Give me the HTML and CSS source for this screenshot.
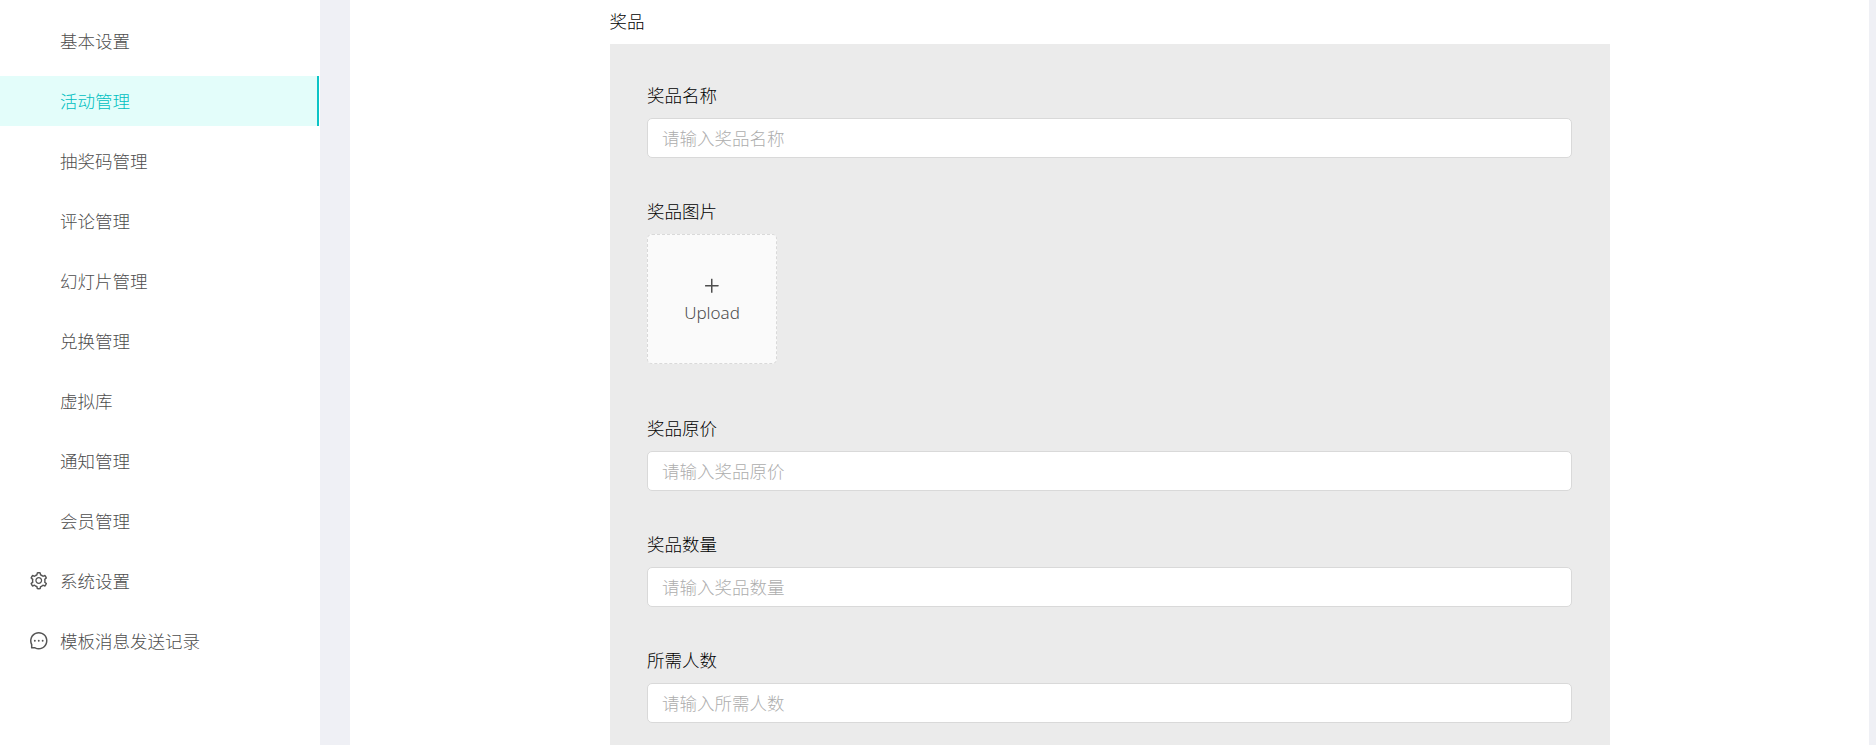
FILE: index.html
```html
<!DOCTYPE html>
<html lang="zh-CN">
<head>
    <meta charset="UTF-8">
    <meta name="viewport" content="width=device-width, initial-scale=1.0">
    <title>活动管理</title>
    <link rel="stylesheet" href="styles.css">
</head>
<body>

    <div class="layout">
        <!-- 侧边栏 -->
        <aside class="sider">
            <ul class="menu">
                <li class="menu-item">基本设置</li>
                <li class="menu-item active">活动管理</li>
                <li class="menu-item">抽奖码管理</li>
                <li class="menu-item">评论管理</li>
                <li class="menu-item">幻灯片管理</li>
                <li class="menu-item">兑换管理</li>
                <li class="menu-item">虚拟库</li>
                <li class="menu-item">通知管理</li>
                <li class="menu-item">会员管理</li>
                <li class="menu-item has-icon">
                    <svg class="menu-icon" viewBox="64 64 896 896" fill="currentColor"><path d="M924.8 625.7l-65.5-56c3.1-19 4.7-38.4 4.7-57.8s-1.6-38.8-4.7-57.8l65.5-56a32.03 32.03 0 0 0 9.3-35.2l-.9-2.6a443.74 443.74 0 0 0-79.7-137.9l-1.8-2.1a32.12 32.12 0 0 0-35.1-9.5l-81.3 28.9c-30-24.6-63.5-44-99.7-57.6l-15.7-85a32.05 32.05 0 0 0-25.8-25.7l-2.7-.5c-52.1-9.4-106.9-9.4-159 0l-2.7.5a32.05 32.05 0 0 0-25.8 25.7l-15.8 85.4a351.86 351.86 0 0 0-99 57.4l-81.9-29.1a32 32 0 0 0-35.1 9.5l-1.8 2.1a446.02 446.02 0 0 0-79.7 137.9l-.9 2.6c-4.5 12.5-.8 26.5 9.3 35.2l66.3 56.6c-3.1 18.8-4.6 38-4.6 57.1 0 19.2 1.5 38.4 4.6 57.1L99 625.5a32.03 32.03 0 0 0-9.3 35.2l.9 2.6c18.1 50.4 44.9 96.9 79.7 137.9l1.8 2.1a32.12 32.12 0 0 0 35.1 9.5l81.9-29.1c29.8 24.5 63.1 43.9 99 57.4l15.8 85.4a32.05 32.05 0 0 0 25.8 25.7l2.7.5a449.4 449.4 0 0 0 159 0l2.7-.5a32.05 32.05 0 0 0 25.8-25.7l15.7-85a350 350 0 0 0 99.7-57.6l81.3 28.9a32 32 0 0 0 35.1-9.5l1.8-2.1c34.8-41.1 61.6-87.5 79.7-137.9l.9-2.6c4.5-12.3.8-26.3-9.3-35zM788.3 465.9c2.5 15.1 3.8 30.6 3.8 46.1s-1.3 31-3.8 46.1l-6.6 40.1 74.7 63.9a370.03 370.03 0 0 1-42.6 73.6L721 702.8l-31.4 25.8c-23.9 19.6-50.5 35-79.3 45.8l-38.1 14.3-17.9 97a377.5 377.5 0 0 1-85 0l-17.9-97.2-37.8-14.5c-28.5-10.8-55-26.2-78.7-45.7l-31.4-25.9-93.4 33.2c-17-22.9-31.2-47.6-42.6-73.6l75.5-64.5-6.5-40c-2.4-14.9-3.7-30.3-3.7-45.5 0-15.3 1.2-30.6 3.7-45.5l6.5-40-75.5-64.5c11.3-26.1 25.6-50.7 42.6-73.6l93.4 33.2 31.4-25.9c23.7-19.5 50.2-34.9 78.7-45.7l37.9-14.3 17.9-97.2c28.1-3.2 56.8-3.2 85 0l17.9 97 38.1 14.3c28.7 10.8 55.4 26.2 79.3 45.8l31.4 25.8 92.8-32.9c17 22.9 31.2 47.6 42.6 73.6L781.8 426l6.5 39.9zM512 326c-97.2 0-176 78.8-176 176s78.8 176 176 176 176-78.8 176-176-78.8-176-176-176zm79.2 255.2A111.6 111.6 0 0 1 512 614c-29.9 0-58-11.7-79.2-32.8A111.6 111.6 0 0 1 400 502c0-29.9 11.7-58 32.8-79.2C454 401.6 482.1 390 512 390c29.9 0 58 11.6 79.2 32.8A111.6 111.6 0 0 1 624 502c0 29.9-11.7 58-32.8 79.2z"/></svg>
                    系统设置
                </li>
                <li class="menu-item has-icon">
                    <svg class="menu-icon" viewBox="64 64 896 896" fill="currentColor"><path d="M464 512a48 48 0 1 0 96 0 48 48 0 1 0-96 0zm200 0a48 48 0 1 0 96 0 48 48 0 1 0-96 0zm-400 0a48 48 0 1 0 96 0 48 48 0 1 0-96 0zm661.2-173.6c-22.6-53.7-55-101.9-96.3-143.3a444.35 444.35 0 0 0-143.3-96.3C630.6 75.7 572.2 64 512 64h-2c-60.6.3-119.3 12.3-174.5 35.9a445.35 445.35 0 0 0-142 96.5c-40.9 41.3-73 89.3-95.2 142.8-23 55.4-34.6 114.3-34.3 174.9A449.4 449.4 0 0 0 112 714v152a46 46 0 0 0 46 46h152.1A449.4 449.4 0 0 0 510 960h2.1c59.9 0 118-11.6 172.7-34.3a444.48 444.48 0 0 0 142.8-95.2c41.3-40.9 73.8-88.7 96.5-142 23.6-55.2 35.6-113.9 35.9-174.5.3-60.9-11.5-120-34.8-175.6zm-151.1 438C704 845.8 611 884 512 884h-1.7c-60.3-.3-120.2-15.3-173.1-43.5l-8.4-4.5H188V695.2l-4.5-8.4C155.3 633.9 140.3 574 140 513.7c-.4-99.7 37.7-193.3 107.6-263.8 69.8-70.5 163.1-109.5 262.8-109.9h1.7c50 0 98.5 9.7 144.2 28.9 44.6 18.7 84.6 45.6 119 80 34.3 34.3 61.3 74.4 80 119 19.4 46.2 29.1 95.2 28.9 145.8-.6 99.6-39.7 192.9-110.1 262.7z"/></svg>
                    模板消息发送记录
                </li>
            </ul>
        </aside>

        <!-- 内容区 -->
        <main class="content">
            <form class="prize-form">
                <div class="prize-title">奖品</div>
                <div class="prize-panel">
                    <div class="form-item">
                        <label class="form-label" for="prizeName">奖品名称</label>
                        <input class="form-input" type="text" id="prizeName" placeholder="请输入奖品名称">
                    </div>

                    <div class="form-item form-item-upload">
                        <label class="form-label">奖品图片</label>
                        <div class="upload-box">
                            <svg class="upload-plus" viewBox="64 64 896 896" fill="currentColor"><path d="M482 152h60q8 0 8 8v704q0 8-8 8h-60q-8 0-8-8V160q0-8 8-8z"/><path d="M176 474h672q8 0 8 8v60q0 8-8 8H176q-8 0-8-8v-60q0-8 8-8z"/></svg>
                            <div class="upload-text">Upload</div>
                        </div>
                    </div>

                    <div class="form-item">
                        <label class="form-label" for="prizePrice">奖品原价</label>
                        <input class="form-input" type="text" id="prizePrice" placeholder="请输入奖品原价">
                    </div>

                    <div class="form-item">
                        <label class="form-label" for="prizeCount">奖品数量</label>
                        <input class="form-input" type="text" id="prizeCount" placeholder="请输入奖品数量">
                    </div>

                    <div class="form-item">
                        <label class="form-label" for="needCount">所需人数</label>
                        <input class="form-input" type="text" id="needCount" placeholder="请输入所需人数">
                    </div>
                </div>
            </form>
        </main>
    </div>

</body>
</html>
```

FILE: styles.css
```css
html, body {
    height: 745px;
    margin: 0;
    overflow: hidden;
}
body {
    font-family: 'Liberation Sans', 'Noto Sans CJK SC', sans-serif;
    font-size: 17.5px;
    font-weight: 300;
    background-color: #eff0f5;
}
.layout {
    display: flex;
    height: 745px;
    overflow: hidden;
}

/* 侧边栏 */
.sider {
    width: 320px;
    flex-shrink: 0;
    background-color: #fff;
}
.menu {
    list-style: none;
    margin: 0;
    padding: 16px 1px 0 0;
    display: flex;
    flex-direction: column;
    gap: 10px;
}
.menu-item {
    display: flex;
    align-items: center;
    height: 50px;
    padding: 0 0 1px 60px;
    color: #4d4d4d;
    box-sizing: border-box;
}
.menu-item.active {
    background-color: #e3fdfa;
    border-right: 2px solid #0cc4c6;
    color: #00bfc1;
}
.menu-item.has-icon {
    padding-left: 30px;
}
.menu-icon {
    width: 17.5px;
    height: 17.5px;
    margin: 1px 12.5px 0 0;
    color: #555;
}

/* 内容区 */
.content {
    flex: 1;
    margin: 0 7px 0 30px;
    background-color: #fff;
}
.prize-form {
    width: 1000px;
    margin: 0 auto;
    padding-top: 8px;
}
.prize-title {
    height: 28px;
    margin-bottom: 8px;
    line-height: 28px;
    color: #000;
}
.prize-panel {
    padding: 38px 37.5px 40px;
    background-color: #ebebeb;
}
.form-item {
    margin-bottom: 40px;
}
.form-item-upload {
    margin-bottom: 51px;
}
.form-label {
    display: block;
    height: 28px;
    margin-bottom: 8px;
    line-height: 28px;
    color: #000;
}
.form-input {
    display: block;
    width: 100%;
    height: 40px;
    padding: 2px 14px 0;
    box-sizing: border-box;
    border: 1px solid #d9d9d9;
    border-radius: 5px;
    background-color: #fff;
    font-family: inherit;
    font-size: 17.5px;
    font-weight: 300;
    color: #222;
    outline: none;
}
.form-input::placeholder {
    color: #adadad;
}
.upload-box {
    display: flex;
    flex-direction: column;
    align-items: center;
    justify-content: center;
    width: 130px;
    height: 130px;
    padding-top: 4px;
    box-sizing: border-box;
    border: 1px dashed #d9d9d9;
    border-radius: 5px;
    background-color: #fafafa;
    color: #4d4d4d;
}
.upload-plus {
    width: 17.5px;
    height: 17.5px;
}
.upload-text {
    margin-top: 6px;
    font-family: 'Noto Sans', sans-serif;
    font-size: 17px;
    line-height: 24px;
}
```
